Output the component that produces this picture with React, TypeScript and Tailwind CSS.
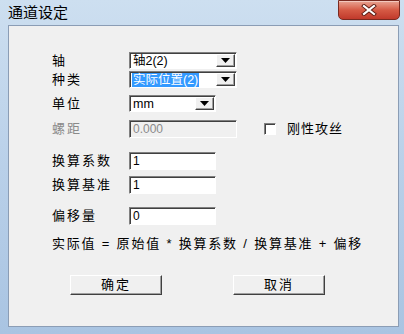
import React from "react";

const font = { fontFamily: '"Liberation Sans", "Noto Sans CJK SC", sans-serif' };

function Arrow() {
  return (
    <div className="w-[19px] h-full bg-[#f0f0f0] border border-t-white border-l-white border-r-[#404040] border-b-[#404040] flex items-center justify-center shadow-[inset_-1px_-1px_0_#a0a0a0]">
      <svg width="9" height="5" viewBox="0 0 9 5">
        <polygon points="0,0 9,0 4.5,5" fill="#000" />
      </svg>
    </div>
  );
}

function Combo({ w, text, selected }: { w: string; text: string; selected?: boolean }) {
  return (
    <div className={`${w} h-[17px] bg-white flex items-stretch border border-t-[#808080] border-l-[#808080] border-b-white border-r-white shadow-[inset_1px_1px_0_#404040]`}>
      <div className="flex-1 flex items-center pl-[2px] pt-[1px] overflow-hidden">
        <span className={`text-[12.5px] leading-[14px] whitespace-nowrap px-[1px] ${selected ? "bg-[#3399ff] text-white" : "text-black"}`}>{text}</span>
      </div>
      <div className="py-[1px] pr-[1px]"><Arrow /></div>
    </div>
  );
}

function Input({ w, text, disabled }: { w: string; text: string; disabled?: boolean }) {
  return (
    <div className={`${w} h-[18px] ${disabled ? "bg-[#f0f0f0] text-[#8a8a8a]" : "bg-white text-black"} flex items-center pl-[3px] border border-t-[#808080] border-l-[#808080] border-b-white border-r-white shadow-[inset_1px_1px_0_#404040] text-[12px] leading-[14px]`}>
      {text}
    </div>
  );
}

function Row({ label, cls, children, gray }: { label: string; cls: string; children: React.ReactNode; gray?: boolean }) {
  return (
    <div className={`flex items-center ${cls}`}>
      <div className={`w-[77px] text-[13px] leading-[16px] tracking-[2px] ${gray ? "text-[#8a8a8a]" : "text-black"}`}>{label}</div>
      {children}
    </div>
  );
}

function Btn({ text }: { text: string }) {
  return (
    <div className="w-[92px] h-[20px] bg-[#f0f0f0] border border-t-white border-l-white border-r-[#404040] border-b-[#404040] shadow-[inset_-1px_-1px_0_#a0a0a0] flex items-center justify-center text-[13px] leading-[16px] tracking-[2px] text-black">
      {text}
    </div>
  );
}

export default function App() {
  return (
    <div style={font} className="w-[404px] h-[334px] overflow-hidden flex flex-col bg-gradient-to-b from-[#cddff0] via-[#b9d0e9] to-[#a9c4e2]">
      <div className="h-[25px] flex items-start relative">
        <div className="pl-[8px] pt-[4px] text-[15px] leading-[18px] text-black">通道设定</div>
        <div className="absolute right-[4px] top-0 w-[62px] h-[20px] rounded-b-[5px] border border-[#7a2a20] bg-gradient-to-b from-[#e8a493] via-[#d65a45] to-[#c0392b] flex items-center justify-center shadow-[inset_0_1px_0_#f3c8bd]">
          <svg width="16" height="12" viewBox="0 0 16 12">
            <path d="M3 2 L13 10 M13 2 L3 10" stroke="#5a1a12" strokeWidth="4" strokeLinecap="square" />
            <path d="M3 2 L13 10 M13 2 L3 10" stroke="#ffffff" strokeWidth="2.2" strokeLinecap="square" />
          </svg>
        </div>
      </div>
      <div className="flex pl-[8px] pr-[5px]">
        <div className="flex-1 h-[302px] bg-[#f0f0f0] border border-[#8b9db5] flex flex-col pl-[43px]">
          <Row label="轴" cls="mt-[26px] h-[17px]"><Combo w="w-[108px]" text="轴2(2)" /></Row>
          <Row label="种类" cls="mt-[2px] h-[17px]"><Combo w="w-[108px]" text="实际位置(2)" selected /></Row>
          <Row label="单位" cls="mt-[7px] h-[17px]"><Combo w="w-[87px]" text="mm" /></Row>
          <Row label="螺距" cls="mt-[8px] h-[18px]" gray>
            <Input w="w-[108px]" text="0.000" disabled />
            <div className="ml-[27px] w-[12px] h-[12px] bg-white border border-t-[#808080] border-l-[#808080] border-b-white border-r-white shadow-[inset_1px_1px_0_#404040]" />
            <div className="ml-[11px] text-[13px] leading-[16px] tracking-[1px] text-black">刚性攻丝</div>
          </Row>
          <Row label="换算系数" cls="mt-[14px] h-[18px]"><Input w="w-[87px]" text="1" /></Row>
          <Row label="换算基准" cls="mt-[6px] h-[18px]"><Input w="w-[87px]" text="1" /></Row>
          <Row label="偏移量" cls="mt-[13px] h-[18px]"><Input w="w-[87px]" text="0" /></Row>
          <div className="mt-[10px] h-[17px] flex items-center text-[13px] leading-[16px] tracking-[1.8px] text-black whitespace-nowrap">实际值 = 原始值 * 换算系数 / 换算基准 + 偏移</div>
          <div className="flex mt-[23px] pl-[18px] gap-[71px]">
            <Btn text="确定" />
            <Btn text="取消" />
          </div>
        </div>
      </div>
    </div>
  );
}
